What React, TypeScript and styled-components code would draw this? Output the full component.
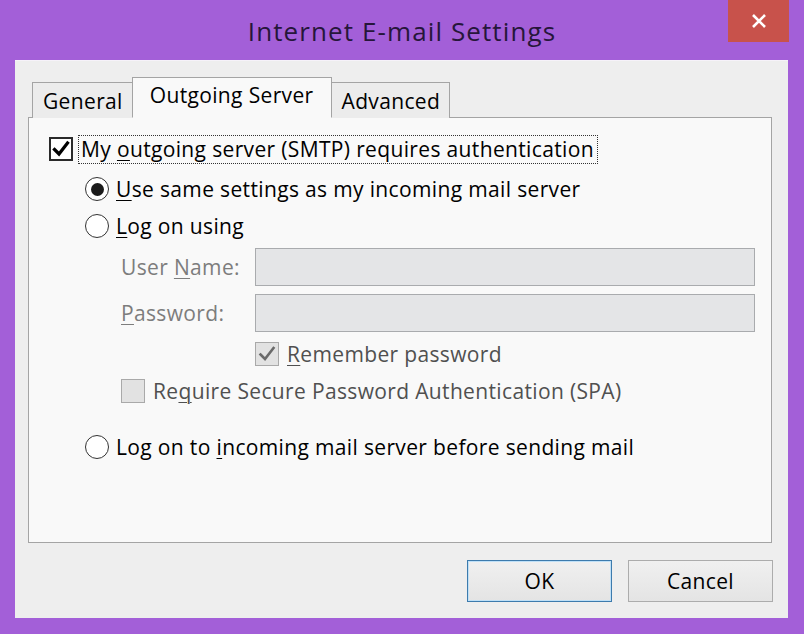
import React from "react";
import styled, { createGlobalStyle } from "styled-components";

const Global = createGlobalStyle`
  html, body { margin: 0; padding: 0; }
  body { font-family: "Open Sans", "Noto Sans", sans-serif; }
  * { box-sizing: border-box; }
`;

const Window = styled.div`
  width: 804px;
  height: 634px;
  background: #a35fd8;
  display: flex;
  flex-direction: column;
  overflow: hidden;
`;

const TitleBar = styled.div`
  height: 60px;
  flex: 0 0 auto;
  display: grid;
  grid-template-columns: 1fr auto 1fr;
  align-items: start;
`;

const Title = styled.div`
  grid-column: 2;
  padding-top: 18px;
  font-size: 26px;
  line-height: 26px;
  letter-spacing: 1.1px;
  color: #26163a;
  white-space: nowrap;
`;

const CloseButton = styled.div`
  grid-column: 3;
  justify-self: end;
  margin-right: 15px;
  width: 61px;
  height: 42px;
  background: #c8524b;
  display: flex;
  align-items: center;
  justify-content: center;
`;

const Client = styled.div`
  flex: 1;
  margin: 0 16px 16px 15px;
  background: #eeeeee;
  border-top: 1px solid #f6f2f9;
  display: flex;
  flex-direction: column;
  padding: 16px 16px 16px 13px;
  font-size: 21px;
  letter-spacing: 0.35px;
`;

const TabRow = styled.div`
  display: flex;
  align-items: flex-end;
  margin-left: 4px;
  margin-bottom: -1px;
  position: relative;
  z-index: 1;
`;

const Tab = styled.div<{ $active?: boolean }>`
  height: ${(p) => (p.$active ? 41 : 36)}px;
  padding: ${(p) => (p.$active ? "0 17px 5px" : "0 9px 0 10px")};
  display: flex;
  align-items: center;
  color: #000;
  background: ${(p) => (p.$active ? "#f9f9f9" : "#ececec")};
  border: 1px solid #a4a4a4;
  border-bottom: ${(p) => (p.$active ? "1px solid #f9f9f9" : "none")};
  margin-left: ${(p) => (p.$active ? -1 : 0)}px;
  margin-right: ${(p) => (p.$active ? -1 : 0)}px;
  position: relative;
  z-index: ${(p) => (p.$active ? 2 : 1)};
  white-space: nowrap;
`;

const Panel = styled.div`
  flex: 1;
  background: #f9f9f9;
  border: 1px solid #a4a4a4;
  padding: 16px 0 0 20px;
  display: flex;
  flex-direction: column;
  color: #000;
`;

const Row = styled.div<{ $indent: number; $mt: number; $h?: number; $gap?: number }>`
  display: flex;
  align-items: center;
  gap: ${(p) => p.$gap ?? 7}px;
  margin-left: ${(p) => p.$indent}px;
  margin-top: ${(p) => p.$mt}px;
  height: ${(p) => p.$h ?? 30}px;
  white-space: nowrap;
`;

const Box = styled.span<{ $disabled?: boolean }>`
  width: 24px;
  height: 24px;
  flex: 0 0 auto;
  border: ${(p) => (p.$disabled ? "1px solid #a9a9a9" : "2px solid #2a2a2a")};
  background: ${(p) => (p.$disabled ? "#e2e2e2" : "#ffffff")};
  display: flex;
  align-items: center;
  justify-content: center;
`;

const RadioCircle = styled.span`
  width: 24px;
  height: 24px;
  flex: 0 0 auto;
  border-radius: 50%;
  border: 1.5px solid #333;
  background: #fff;
  display: flex;
  align-items: center;
  justify-content: center;
`;

const RadioDot = styled.span`
  width: 13px;
  height: 13px;
  border-radius: 50%;
  background: #1b1b1b;
`;

const Text = styled.span<{ $muted?: boolean }>`
  color: ${(p) => (p.$muted ? "#505050" : "#000")};
`;

const FocusText = styled.span`
  border: 1px dotted #333;
  padding: 0 3px 0 2px;
  line-height: 27px;
`;

const Key = styled.span`
  text-decoration: underline;
  text-underline-offset: 3px;
  text-decoration-thickness: 1px;
`;

const FieldLabel = styled.span`
  width: 134px;
  flex: 0 0 auto;
  color: #7d7d7d;
`;

const TextBox = styled.input`
  width: 500px;
  height: 38px;
  background: #e4e5e7;
  border: 1px solid #a9abae;
  outline: none;
  margin: 0;
  padding: 0;
`;

const ButtonBar = styled.div`
  display: flex;
  justify-content: flex-end;
  gap: 16px;
  margin-top: 17px;
  margin-right: -1px;
`;

const Button = styled.button<{ $primary?: boolean }>`
  width: 145px;
  height: 42px;
  font-family: inherit;
  font-size: 21px;
  letter-spacing: 0.35px;
  color: #000;
  background: linear-gradient(#f0f0f0, #e4e4e4);
  border: 1px solid ${(p) => (p.$primary ? "#3d7bad" : "#acacac")};
  box-shadow: ${(p) => (p.$primary ? "inset 0 0 0 1px #bfe0f7" : "none")};
  padding: 0;
`;

const Check = ({ color, width }: { color: string; width: number }) => (
  <svg width="20" height="20" viewBox="0 0 20 20">
    <polyline
      points="3.5,10.5 8,15 16.5,4"
      fill="none"
      stroke={color}
      strokeWidth={width}
      strokeLinecap="square"
      strokeLinejoin="miter"
    />
  </svg>
);

const CheckBox = ({ checked, disabled }: { checked?: boolean; disabled?: boolean }) => (
  <Box $disabled={disabled}>
    {checked && <Check color={disabled ? "#6a6a6a" : "#000"} width={disabled ? 2.6 : 3.2} />}
  </Box>
);

const Radio = ({ checked }: { checked?: boolean }) => (
  <RadioCircle>{checked && <RadioDot />}</RadioCircle>
);

export default function App() {
  return (
    <>
      <Global />
      <Window>
        <TitleBar>
          <div />
          <Title>Internet E-mail Settings</Title>
          <CloseButton>
            <svg width="16" height="16" viewBox="0 0 16 16">
              <path d="M2 2 L14 14 M14 2 L2 14" stroke="#fff" strokeWidth="2.6" />
            </svg>
          </CloseButton>
        </TitleBar>
        <Client>
          <TabRow>
            <Tab>General</Tab>
            <Tab $active>Outgoing Server</Tab>
            <Tab>Advanced</Tab>
          </TabRow>
          <Panel>
            <Row $indent={0} $mt={0} $gap={5}>
              <CheckBox checked />
              <FocusText>
                My <Key>o</Key>utgoing server (SMTP) requires authentication
              </FocusText>
            </Row>
            <Row $indent={36} $mt={10}>
              <Radio checked />
              <Text>
                <Key>U</Key>se same settings as my incoming mail server
              </Text>
            </Row>
            <Row $indent={36} $mt={7}>
              <Radio />
              <Text>
                <Key>L</Key>og on using
              </Text>
            </Row>
            <Row $indent={72} $mt={7} $h={38} $gap={0}>
              <FieldLabel>
                User <Key>N</Key>ame:
              </FieldLabel>
              <TextBox disabled />
            </Row>
            <Row $indent={72} $mt={8} $h={38} $gap={0}>
              <FieldLabel>
                <Key>P</Key>assword:
              </FieldLabel>
              <TextBox disabled type="password" />
            </Row>
            <Row $indent={206} $mt={7} $gap={8}>
              <CheckBox checked disabled />
              <Text $muted>
                <Key>R</Key>emember password
              </Text>
            </Row>
            <Row $indent={72} $mt={7} $gap={8}>
              <CheckBox disabled />
              <Text $muted>
                Re<Key>q</Key>uire Secure Password Authentication (SPA)
              </Text>
            </Row>
            <Row $indent={36} $mt={26}>
              <Radio />
              <Text>
                Log on to <Key>i</Key>ncoming mail server before sending mail
              </Text>
            </Row>
          </Panel>
          <ButtonBar>
            <Button $primary>OK</Button>
            <Button>Cancel</Button>
          </ButtonBar>
        </Client>
      </Window>
    </>
  );
}
